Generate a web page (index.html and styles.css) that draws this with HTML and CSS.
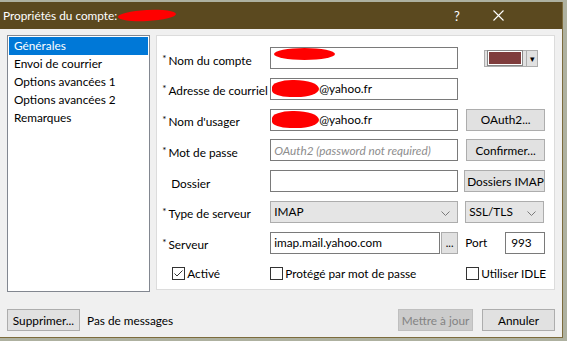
FILE: index.html
```html
<!DOCTYPE html>
<html lang="fr">
<head>
  <meta charset="UTF-8">
  <title>Propriétés du compte</title>
  <link rel="stylesheet" href="styles.css">
</head>
<body>
  <div class="win">
    <div class="titlebar">
      <span class="title">Propriétés du compte:</span>
      <span class="blot blot-title"></span>
      <span class="tb-help">?</span>
      <span class="tb-close">
        <svg width="11" height="11" viewBox="0 0 11 11"><path d="M0.5 0.5 L10.5 10.5 M10.5 0.5 L0.5 10.5" stroke="#fff" stroke-width="1.1"/></svg>
      </span>
    </div>

    <div class="main">
      <ul class="side">
        <li class="sel">Générales</li>
        <li>Envoi de courrier</li>
        <li>Options avancées 1</li>
        <li>Options avancées 2</li>
        <li>Remarques</li>
      </ul>

      <div class="panel">
        <div class="row">
          <label class="lbl"><span class="star">*</span>Nom du compte</label>
          <div class="field"><span class="blot blot-a"></span></div>
          <div class="extra">
            <div class="colorpick">
              <span class="swatch"></span>
              <span class="cp-arrow">▾</span>
            </div>
          </div>
        </div>
        <div class="row">
          <label class="lbl"><span class="star">*</span>Adresse de courriel</label>
          <div class="field"><span class="blot blot-b"></span>@yahoo.fr</div>
          <div class="extra"></div>
        </div>
        <div class="row">
          <label class="lbl"><span class="star">*</span>Nom d'usager</label>
          <div class="field"><span class="blot blot-b"></span>@yahoo.fr</div>
          <div class="extra"><button class="btn side-btn">OAuth2...</button></div>
        </div>
        <div class="row">
          <label class="lbl"><span class="star">*</span>Mot de passe</label>
          <div class="field hint">OAuth2 (password not required)</div>
          <div class="extra"><button class="btn side-btn">Confirmer...</button></div>
        </div>
        <div class="row">
          <label class="lbl nostar">Dossier</label>
          <div class="field"></div>
          <div class="extra"><button class="btn side-btn wide">Dossiers IMAP</button></div>
        </div>
        <div class="row">
          <label class="lbl"><span class="star">*</span>Type de serveur</label>
          <div class="field select">IMAP
            <svg class="chev" width="9" height="5" viewBox="0 0 9 5"><path d="M0.5 0.5 L4.5 4.5 L8.5 0.5" fill="none" stroke="#7a7a7a"/></svg>
          </div>
          <div class="extra">
            <div class="field select small">SSL/TLS
              <svg class="chev" width="9" height="5" viewBox="0 0 9 5"><path d="M0.5 0.5 L4.5 4.5 L8.5 0.5" fill="none" stroke="#7a7a7a"/></svg>
            </div>
          </div>
        </div>
        <div class="row">
          <label class="lbl"><span class="star">*</span>Serveur</label>
          <div class="server">
            <div class="field grow">imap.mail.yahoo.com</div>
            <button class="btn dots">...</button>
          </div>
          <div class="extra port">
            <span>Port</span>
            <div class="field portbox">993</div>
          </div>
        </div>
        <div class="row checks">
          <label class="chk first">
            <svg width="13" height="13" viewBox="0 0 13 13"><rect x="0.5" y="0.5" width="12" height="12" fill="#fff" stroke="#333"/><path d="M2.5 6.5 L5 9 L10.5 3.5" fill="none" stroke="#333" stroke-width="1"/></svg>
            Activé
          </label>
          <label class="chk">
            <svg width="13" height="13" viewBox="0 0 13 13"><rect x="0.5" y="0.5" width="12" height="12" fill="#fff" stroke="#333"/></svg>
            Protégé par mot de passe
          </label>
          <label class="chk">
            <svg width="13" height="13" viewBox="0 0 13 13"><rect x="0.5" y="0.5" width="12" height="12" fill="#fff" stroke="#333"/></svg>
            Utiliser IDLE
          </label>
        </div>
      </div>
    </div>

    <div class="footer">
      <button class="btn del">Supprimer...</button>
      <span class="status">Pas de messages</span>
      <span class="spacer"></span>
      <button class="btn disabled">Mettre à jour</button>
      <button class="btn cancel">Annuler</button>
    </div>
  </div>
</body>
</html>
```

FILE: styles.css
```css
html, body {
  margin: 0;
  height: 100%;
}

body {
  background: #aeb1a0;
  font-family: Lato, "Noto Sans", sans-serif;
  font-size: 11.5px;
  color: #000;
  overflow: hidden;
  white-space: nowrap;
}

.win {
  margin-top: 2px;
  width: 562px;
  height: 335px;
  background: #f0f0f0;
  border-right: 1px solid #7d6c3c;
  border-bottom: 1px solid #7d6c3c;
  display: flex;
  flex-direction: column;
}

.titlebar {
  height: 27px;
  background: #5b491f;
  color: #fff;
  display: flex;
  align-items: center;
  padding-left: 3px;
  font-size: 11.8px;
}

.blot {
  display: inline-block;
  background: #ff0000;
  border-radius: 50%;
  flex-shrink: 0;
}

.blot-title {
  width: 58px;
  height: 11px;
  margin-left: 1px;
  transform: rotate(-3deg);
}

.tb-help {
  margin-left: auto;
  width: 30px;
  text-align: center;
  font-size: 13px;
}

.tb-close {
  width: 46px;
  margin-left: 3px;
  margin-right: 41px;
  display: flex;
  justify-content: center;
}

.main {
  display: flex;
  padding: 6px 7px 0 7px;
  gap: 6px;
}

.side {
  list-style: none;
  margin: 0;
  padding: 1px;
  width: 141px;
  height: 253px;
  background: #fff;
  border: 1px solid #828790;
}

.side li {
  height: 18px;
  line-height: 18px;
  padding-left: 5px;
  font-size: 11.8px;
}

.side li.sel {
  background: #0078d7;
  color: #fff;
}

.panel {
  width: 397px;
  height: 242px;
  background: #fff;
  border: 1px solid #dcdcdc;
  padding: 11px 0 0 5px;
  display: flex;
  flex-direction: column;
  gap: 8.8px;
}

.row {
  display: grid;
  grid-template-columns: 108px 188px 87px;
  height: 22px;
  align-items: center;
}

.lbl {
  font-size: 11.8px;
  padding-top: 4px;
}

.star {
  font-size: 10px;
  margin-right: 2px;
  position: relative;
  top: -3px;
}

.nostar {
  padding-left: 9px;
}

.field {
  height: 20px;
  border: 1px solid #7a7a7a;
  background: #fff;
  display: flex;
  align-items: center;
  padding-left: 3px;
  font-size: 11.8px;
  overflow: hidden;
}

.blot-a {
  width: 61px;
  height: 12px;
  margin-top: -8px;
}

.blot-b {
  width: 47px;
  height: 17px;
  margin-left: -2px;
  border-radius: 45% 55% 50% 40%;
}

.hint {
  color: #8d8d8d;
  font-style: italic;
}

.select {
  background: #e5e5e5;
  border-color: #adadad;
  position: relative;
}

.chev {
  position: absolute;
  right: 7px;
  top: 9px;
}

.small {
  width: 74px;
  margin-left: 7px;
}

.extra {
  display: flex;
  align-items: center;
}

.colorpick {
  margin-left: 26px;
  width: 49px;
  height: 15px;
  border: 1px solid #adadad;
  background: #e1e1e1;
  display: flex;
  align-items: center;
  padding: 0 0 0 3px;
}

.swatch {
  width: 32px;
  height: 12px;
  background: #7f3c3c;
  border: 1px solid #fff;
  outline: 1px solid #888;
}

.cp-arrow {
  margin-left: 4px;
  border-left: 1px solid #adadad;
  height: 15px;
  line-height: 15px;
  padding-left: 3px;
  font-size: 9px;
}

.btn {
  font-family: inherit;
  font-size: 11.8px;
  background: #e1e1e1;
  border: 1px solid #adadad;
  height: 22px;
  padding: 0 7px;
  color: #000;
  white-space: nowrap;
}

.side-btn {
  margin-left: 8px;
  width: 79px;
}

.side-btn.wide {
  margin-left: 6px;
  width: 81px;
  padding: 0 2px;
}

.server {
  display: flex;
  height: 22px;
}

.grow {
  flex: 1;
}

.dots {
  width: 17px;
  padding: 0;
  margin-left: 1px;
  font-size: 11px;
}

.port {
  padding-left: 7px;
  font-size: 11.8px;
}

.portbox {
  margin-left: 18px;
  width: 33px;
  padding-left: 5px;
}

.checks {
  margin-top: 2px;
  height: 18px;
}

.chk {
  display: flex;
  align-items: center;
  gap: 2px;
  font-size: 11.8px;
}

.chk svg {
  flex-shrink: 0;
}

.chk.first {
  padding-left: 10px;
}

.chk:last-child {
  padding-left: 8px;
}

.footer {
  display: flex;
  align-items: center;
  padding: 0 7px;
  margin-top: 17px;
}

.del {
  width: 73px;
  padding: 0;
}

.status {
  margin-left: 7px;
  font-size: 11.8px;
}

.spacer {
  flex: 1;
}

.disabled {
  background: #cccccc;
  border-color: #bfbfbf;
  color: #838383;
  width: 75px;
  padding: 0;
}

.cancel {
  margin-left: 9px;
  width: 73px;
}
```
